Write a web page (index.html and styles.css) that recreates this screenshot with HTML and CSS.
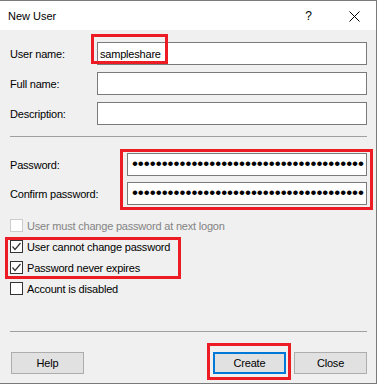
FILE: index.html
```html
<!DOCTYPE html>
<html lang="en">
<head>
  <meta charset="UTF-8" />
  <title>New User</title>
  <link rel="stylesheet" href="styles.css">
</head>
<body>

  <div class="dialog">
    <div class="titlebar">
      <span class="title">New User</span>
      <span class="title-help">?</span>
      <span class="title-close">
        <svg width="11" height="11" viewBox="0 0 11 11">
          <path d="M0.5 0.5 L10.5 10.5 M10.5 0.5 L0.5 10.5" stroke="#000" stroke-width="1" fill="none" />
        </svg>
      </span>
    </div>

    <div class="content">
      <div class="fields names">
        <div class="row"><span class="label">User name:</span><div class="input">sampleshare</div></div>
        <div class="row"><span class="label">Full name:</span><div class="input"></div></div>
        <div class="row"><span class="label">Description:</span><div class="input"></div></div>
      </div>

      <div class="sep first"></div>

      <div class="fields passwords">
        <div class="row"><span class="label">Password:</span><div class="input dots">•••••••••••••••••••••••••••••••••••••••</div></div>
        <div class="row"><span class="label">Confirm password:</span><div class="input dots">•••••••••••••••••••••••••••••••••••••••</div></div>
      </div>

      <div class="checks">
        <div class="check disabled"><span class="box"></span>User must change password at next logon</div>
        <div class="check"><span class="box"><svg width="11" height="11" viewBox="0 0 11 11"><path d="M1.5 5.5 L4 8.5 L9.5 2" stroke="#333" stroke-width="1.2" fill="none" /></svg></span>User cannot change password</div>
        <div class="check"><span class="box"><svg width="11" height="11" viewBox="0 0 11 11"><path d="M1.5 5.5 L4 8.5 L9.5 2" stroke="#333" stroke-width="1.2" fill="none" /></svg></span>Password never expires</div>
        <div class="check"><span class="box"></span>Account is disabled</div>
      </div>

      <div class="sep second"></div>

      <div class="buttons">
        <button class="btn help">Help</button>
        <span class="spacer"></span>
        <button class="btn default">Create</button>
        <button class="btn">Close</button>
      </div>
    </div>

    <!-- red highlight marks drawn over the dialog -->
    <div class="mark mark-user"></div>
    <div class="mark mark-pass"></div>
    <div class="mark mark-checks"></div>
    <div class="mark mark-create"></div>
  </div>

</body>
</html>
```

FILE: styles.css
```css
body {
  margin: 0;
  padding: 0;
  background: #fff;
  font-family: 'Liberation Sans', Arial, sans-serif;
  font-size: 11px;
  color: #000;
}

.dialog {
  position: relative;
  box-sizing: border-box;
  width: 377px;
  height: 384px;
  border-top: 1px solid #7a7a7a;
  border-right: 1px solid #7a7a7a;
  border-bottom: 1px solid #7a7a7a;
  display: flex;
  flex-direction: column;
}

.titlebar {
  height: 29px;
  background: #fff;
  display: flex;
  align-items: center;
}

.title {
  margin-left: 8px;
  font-size: 11px;
  flex: 1;
}

.title-help {
  font-size: 12px;
  margin-right: 37px;
}

.title-close {
  display: flex;
  margin-right: 16px;
  margin-top: 1px;
}

.content {
  flex: 1;
  background: #f0f0f0;
  padding: 12px 9px 0 10px;
  letter-spacing: -0.2px;
}

.fields {
  display: flex;
  flex-direction: column;
  gap: 7px;
}

.fields.passwords {
  gap: 6px;
}

.row {
  display: flex;
  align-items: center;
  height: 23px;
}

.names .label {
  width: 87px;
}

.passwords .label {
  width: 117px;
}

.input {
  flex: 1;
  box-sizing: border-box;
  height: 23px;
  background: #fff;
  border: 1px solid #7a7a7a;
  padding: 0 2px;
  display: flex;
  align-items: center;
  overflow: hidden;
  white-space: nowrap;
}

.input.dots {
  justify-content: flex-end;
  font-size: 17px;
  letter-spacing: 0;
  padding: 0 2px 1px 1px;
}

.sep {
  height: 1px;
  background: #a0a0a0;
}

.sep.first {
  margin: 11px 0 16px;
}

.sep.second {
  margin: 32px 0 20px;
}

.checks {
  margin-top: 10px;
  display: flex;
  flex-direction: column;
}

.check {
  height: 21px;
  display: flex;
  align-items: center;
  gap: 4px;
}

.box {
  box-sizing: border-box;
  width: 13px;
  height: 13px;
  border: 1px solid #333;
  background: #fff;
  display: flex;
}

.check.disabled {
  color: #838383;
}

.check.disabled .box {
  border-color: #cccccc;
}

.buttons {
  display: flex;
  gap: 8px;
}

.spacer {
  flex: 1;
}

.btn {
  box-sizing: border-box;
  width: 73px;
  height: 22px;
  background: #e1e1e1;
  border: 1px solid #adadad;
  font-family: inherit;
  font-size: 11px;
  letter-spacing: -0.2px;
  color: #000;
  padding: 0;
}

.btn.help {
  margin-left: 1px;
}

.btn.default {
  border: 2px solid #0078d7;
}

.mark {
  position: absolute;
  box-sizing: border-box;
  border: 3px solid #ed1c24;
}

.mark-user {
  left: 91px;
  top: 33px;
  width: 77px;
  height: 30px;
}

.mark-pass {
  left: 120px;
  top: 148px;
  width: 253px;
  height: 61px;
}

.mark-checks {
  left: 5px;
  top: 236px;
  width: 176px;
  height: 42px;
}

.mark-create {
  left: 207px;
  top: 342px;
  width: 84px;
  height: 37px;
}
```
